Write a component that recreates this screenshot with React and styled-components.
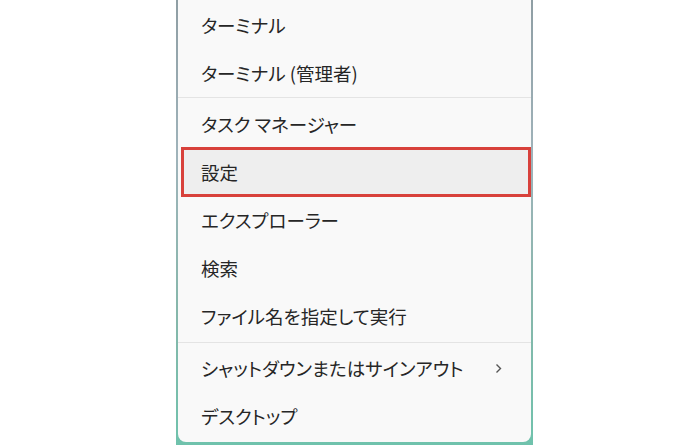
import styled, { createGlobalStyle } from "styled-components";

const GlobalStyle = createGlobalStyle`
  html, body {
    margin: 0;
    padding: 0;
    background: #ffffff;
  }
  body {
    font-family: "Noto Sans CJK JP", "Noto Sans", sans-serif;
  }
`;

const Page = styled.div`
  width: 700px;
  height: 445px;
  display: flex;
  justify-content: flex-start;
  padding-left: 176px;
  box-sizing: border-box;
  overflow: hidden;
`;

// the desktop wallpaper peeking out round the menu
const Desktop = styled.div`
  width: 357px;
  height: 445px;
  padding: 0 2px 3px 2px;
  box-sizing: border-box;
  background: linear-gradient(
    180deg,
    #8f9ea4 0%,
    #9fb3ba 35%,
    #86b7ab 70%,
    #6fc2ac 100%
  );
`;

const Menu = styled.div`
  height: 100%;
  background: #f9f9f9;
  border-radius: 0 0 8px 8px;
  padding-top: 1px;
  box-sizing: border-box;
  display: flex;
  flex-direction: column;
`;

const Item = styled.div`
  height: ${(p) => (p.$active ? "50px" : "48px")};
  margin: ${(p) => (p.$active ? "-1px 0 -1px 3px" : "0")};
  padding: 0 29px 0 ${(p) => (p.$active ? "20px" : "23px")};
  box-sizing: border-box;
  display: flex;
  align-items: center;
  justify-content: space-between;
  font-size: 18.5px;
  font-feature-settings: "palt";
  color: #262626;
  background: ${(p) => (p.$active ? "#eeeeee" : "transparent")};
  box-shadow: ${(p) => (p.$active ? "inset 0 0 0 3px #d8413b" : "none")};
`;

const Separator = styled.div`
  height: 1px;
  background: #e4e4e4;
  margin: ${(p) => p.$margin};
`;

const Chevron = () => (
  <svg width="7" height="11" viewBox="0 0 7 11">
    <path d="M1.5 1.5 L5.5 5.5 L1.5 9.5" fill="none" stroke="#555" strokeWidth="1.4" />
  </svg>
);

const App = () => {
  return (
    <>
      <GlobalStyle />
      <Page>
        <Desktop>
          <Menu>
            <Item>ターミナル</Item>
            <Item>ターミナル (管理者)</Item>
            <Separator $margin="0 0 2px" />
            <Item>タスク マネージャー</Item>
            <Item $active>設定</Item>
            <Item>エクスプローラー</Item>
            <Item>検索</Item>
            <Item>ファイル名を指定して実行</Item>
            <Separator $margin="2px 0 1px" />
            <Item>
              シャットダウンまたはサインアウト
              <Chevron />
            </Item>
            <Item>デスクトップ</Item>
          </Menu>
        </Desktop>
      </Page>
    </>
  );
};

export default App;
